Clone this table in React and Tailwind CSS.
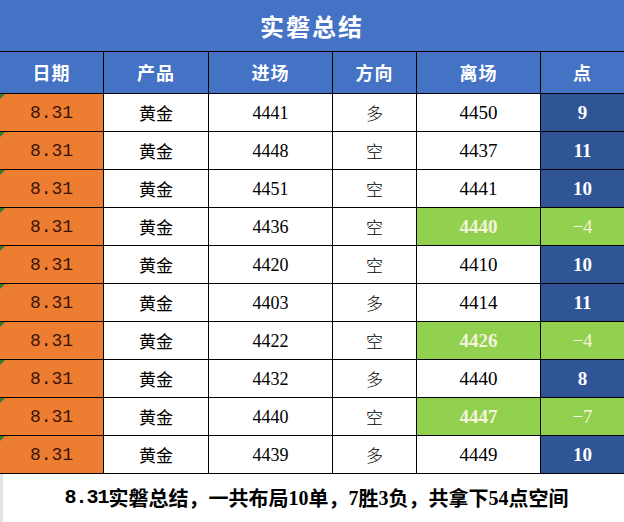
import React from "react";

const rows = [
  ["4441", "多", "4450", "9", false],
  ["4448", "空", "4437", "11", false],
  ["4451", "空", "4441", "10", false],
  ["4436", "空", "4440", "−4", true],
  ["4420", "空", "4410", "10", false],
  ["4403", "多", "4414", "11", false],
  ["4422", "空", "4426", "−4", true],
  ["4432", "多", "4440", "8", false],
  ["4440", "空", "4447", "−7", true],
  ["4439", "多", "4449", "10", false],
];

const headers = ["日期", "产品", "进场", "方向", "离场", "点"];

function HeaderCell({ label, last }) {
  return (
    <div
      className={
        last
          ? "h-[43px] bg-[#4472c4] border-t border-b border-black flex items-center justify-center text-white text-[18px] font-bold tracking-[1px] font-['Noto_Sans_CJK_SC',sans-serif]"
          : "h-[43px] bg-[#4472c4] border-t border-b border-r border-black flex items-center justify-center text-white text-[18px] font-bold tracking-[1px] font-['Noto_Sans_CJK_SC',sans-serif]"
      }
    >
      {label}
    </div>
  );
}

function Row({ inn, dir, out, pts, loss }) {
  return (
    <>
      <div className="relative h-[38px] bg-[#ed7d31] border-r border-b border-black flex items-center justify-center pt-[2px] text-[#3b1408] text-[18px] font-['Liberation_Mono',monospace]">
        <span className="absolute left-0 top-0 w-0 h-0 border-t-[5px] border-r-[5px] border-t-[#2e7d32] border-r-transparent" />
        8.31
      </div>
      <div className="h-[38px] border-r border-b border-black flex items-center justify-center text-[17px] text-black font-['Noto_Sans_CJK_SC',sans-serif]">
        黄金
      </div>
      <div className="h-[38px] border-r border-b border-black flex items-center justify-center pt-[2px] text-[18px] text-black font-['Liberation_Serif',serif]">
        {inn}
      </div>
      <div className="h-[38px] border-r border-b border-black flex items-center justify-center text-[17px] text-black font-['Noto_Sans_CJK_SC',sans-serif] font-light">
        {dir}
      </div>
      {loss ? (
        <div className="h-[38px] border-r border-b border-black bg-[#92d050] flex items-center justify-center pt-[2px] text-[19px] font-bold text-[#f4f4dc] font-['Liberation_Serif',serif]">
          {out}
        </div>
      ) : (
        <div className="h-[38px] border-r border-b border-black flex items-center justify-center pt-[2px] text-[19px] text-black font-['Liberation_Serif',serif]">
          {out}
        </div>
      )}
      {loss ? (
        <div className="h-[38px] border-b border-black bg-[#92d050] flex items-center justify-center pt-[2px] text-[19px] text-[#f4f4dc] font-['Liberation_Serif',serif]">
          {pts}
        </div>
      ) : (
        <div className="h-[38px] border-b border-black bg-[#2f5597] flex items-center justify-center pt-[2px] text-[19px] font-bold text-white font-['Liberation_Serif',serif]">
          {pts}
        </div>
      )}
    </>
  );
}

export default function App() {
  return (
    <div className="w-[624px] h-[522px] bg-white overflow-hidden">
      <div className="h-[51px] bg-[#4472c4] flex items-center justify-center text-white text-[24px] font-bold tracking-[2px] font-['Noto_Sans_CJK_SC',sans-serif]">
        实磐总结
      </div>
      <div className="grid grid-cols-[104px_105px_124px_84px_124px_83px]">
        {headers.map((h, i) => (
          <HeaderCell key={h} label={h} last={i === 5} />
        ))}
        {rows.map(([inn, dir, out, pts, loss], r) => (
          <Row key={r} inn={inn} dir={dir} out={out} pts={pts} loss={loss} />
        ))}
      </div>
      <div className="h-[48px] border-l-[3px] border-[#e4e4e4] flex items-center justify-center pl-[6px] text-[20px] font-bold text-black font-['Liberation_Serif','Noto_Sans_CJK_SC',serif]">
        <span className="font-['Liberation_Mono',monospace] tracking-[-1px]">8.31</span>
        <span className="font-['Noto_Sans_CJK_SC',sans-serif]">实磐总结，一共布局</span>
        <span>10</span>
        <span className="font-['Noto_Sans_CJK_SC',sans-serif]">单，</span>
        <span>7</span>
        <span className="font-['Noto_Sans_CJK_SC',sans-serif]">胜</span>
        <span>3</span>
        <span className="font-['Noto_Sans_CJK_SC',sans-serif]">负，共拿下</span>
        <span>54</span>
        <span className="font-['Noto_Sans_CJK_SC',sans-serif]">点空间</span>
      </div>
    </div>
  );
}
